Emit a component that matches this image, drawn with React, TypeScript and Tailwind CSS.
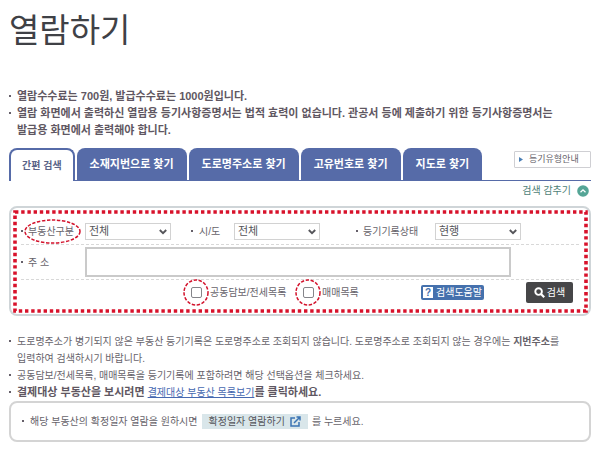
import React, { useState } from 'react';

interface ISelectFieldProps {
    id: string;
    options: string[];
}

const TABS = ['간편 검색', '소재지번으로 찾기', '도로명주소로 찾기', '고유번호로 찾기', '지도로 찾기'];

/** Small square bullet in front of notes and labels */
const Bullet: React.FC = () => <span className="mt-[7px] h-[2px] w-[2px] shrink-0 bg-[#66606a]" />;

/** Dashed red ellipse that highlights the control below it */
const Highlight: React.FC<{ className: string }> = ({ className }) => (
    <svg className={`pointer-events-none absolute overflow-visible ${className}`}>
        <ellipse cx="50%" cy="50%" rx="50%" ry="50%" fill="none" stroke="#d3122c" strokeWidth="1.5" strokeDasharray="3.4 1.6" />
    </svg>
);

const SelectField: React.FC<ISelectFieldProps> = ({ id, options }) => (
    <div className="relative w-[86px] shrink-0">
        <select
            id={id}
            className="h-[17px] w-full appearance-none border border-[#d2d2d2] bg-white pl-[3px] text-[11px] leading-[15px] text-[#55555a]"
        >
            {options.map((option) => (
                <option key={option}>{option}</option>
            ))}
        </select>
        <svg className="pointer-events-none absolute top-[6px] right-1 h-[6px] w-2" viewBox="0 0 8 6" fill="none">
            <path d="M0.8 1 L4 4.2 L7.2 1" stroke="#55555a" strokeWidth="1.9" />
        </svg>
    </div>
);

const App: React.FC = () => {
    const [activeTab, setActiveTab] = useState(0);

    return (
        <main className="bg-white px-[9px] pb-2 font-['Liberation_Sans','Noto_Sans_CJK_KR',sans-serif] text-[10px] text-[#67636b]">
            <h1 className="pt-[11px] text-[33px] leading-10 text-[#3f4146]">열람하기</h1>

            {/* Fee notes */}
            <ul className="mt-[37px] text-[11px] leading-[17px] font-bold text-[#5f5762]">
                <li className="flex gap-[6px]">
                    <Bullet />
                    <span>열람수수료는 700원, 발급수수료는 1000원입니다.</span>
                </li>
                <li className="flex gap-[6px]">
                    <Bullet />
                    <span>
                        열람 화면에서 출력하신 열람용 등기사항증명서는 법적 효력이 없습니다. 관공서 등에 제출하기 위한 등기사항증명서는
                        <br />
                        발급용 화면에서 출력해야 합니다.
                    </span>
                </li>
            </ul>

            {/* Tabs */}
            <div className="mt-[9px] flex items-start justify-between border-b border-[#566ba8]">
                <div className="-mb-px flex gap-[2px]" role="tablist">
                    {TABS.map((tab, index) => (
                        <button
                            key={tab}
                            role="tab"
                            aria-selected={index === activeTab}
                            onClick={() => setActiveTab(index)}
                            className={`h-[33px] rounded-t-lg pb-px font-bold whitespace-nowrap ${index === activeTab
                                    ? 'border-2 border-b-0 border-[#566ba8] bg-white px-[11px] text-[10px] text-[#5a6488]'
                                    : 'bg-[#566ba8] px-[13px] text-[11px] text-white'
                                }`}
                        >
                            {tab}
                        </button>
                    ))}
                </div>
                <button className="mt-[3px] flex h-[17px] w-[77px] items-center gap-[6px] rounded-[1px] border border-[#cfcfd3] bg-white pl-1 text-[9px] whitespace-nowrap text-[#67636b]">
                    <svg className="h-[5px] w-1" viewBox="0 0 4 5">
                        <path d="M0 0 L4 2.5 L0 5 Z" fill="#4b7fb5" />
                    </svg>
                    등기유형안내
                </button>
            </div>

            <div className="flex h-[25px] items-center justify-end pb-[6px]">
                <button className="flex items-center gap-[6px] pr-[2px] text-[#4f7f78]">
                    검색 감추기
                    <svg className="h-3 w-3" viewBox="0 0 12 12">
                        <circle cx="6" cy="6" r="5.8" fill="#55a596" />
                        <path d="M3.5 7.2 L6 4.8 L8.5 7.2" fill="none" stroke="#fff" strokeWidth="1.3" />
                    </svg>
                </button>
            </div>

            {/* Search form */}
            <form
                onSubmit={(event) => event.preventDefault()}
                className="relative rounded-lg border-2 border-[#cfd5d8] px-[10px] pt-[15px] pb-[11px]"
            >
                <div className="pointer-events-none absolute top-1 right-[3px] bottom-[3px] left-1">
                    <svg className="h-full w-full overflow-visible">
                        <rect width="100%" height="100%" fill="none" stroke="#d8122b" strokeWidth="3.6" strokeDasharray="3.4 2.8" />
                    </svg>
                </div>

                <div className="flex items-center border-b border-dashed border-[#d8d8d8] pb-1">
                    <label htmlFor="kind" className="relative flex w-[64px] gap-[5px] leading-[17px]">
                        <Bullet />
                        부동산구분
                        <Highlight className="-top-[3px] left-1 h-[23px] w-[55px]" />
                    </label>
                    <SelectField id="kind" options={['전체', '토지', '건물', '집합건물']} />
                    <label htmlFor="region" className="ml-5 flex w-[43px] gap-[6px] leading-[17px]">
                        <Bullet />
                        시/도
                    </label>
                    <SelectField id="region" options={['전체', '서울특별시', '부산광역시']} />
                    <label htmlFor="status" className="ml-9 flex w-[79px] gap-[5px] leading-[17px]">
                        <Bullet />
                        등기기록상태
                    </label>
                    <SelectField id="status" options={['현행', '폐쇄', '현행+폐쇄']} />
                </div>

                <div className="flex items-center border-b border-dashed border-[#d8d8d8] py-[2px]">
                    <label htmlFor="address" className="flex w-[64px] gap-[5px] leading-[17px]">
                        <Bullet />주 소
                    </label>
                    <input
                        id="address"
                        type="text"
                        className="mr-[68px] h-[30px] min-w-0 flex-1 border-2 border-[#cacaca] bg-white px-2 text-[11px]"
                    />
                </div>

                <div className="flex items-center pt-[2px] pr-[6px] pl-[170px]">
                    <label className="relative flex w-[112px] items-center gap-2">
                        <input type="checkbox" className="h-[11px] w-[11px] appearance-none rounded-[2px] border border-[#85858a] bg-white checked:bg-[#566ba8]" />
                        공동담보/전세목록
                        <Highlight className="-top-[5px] -left-[7px] h-[25px] w-[24px]" />
                    </label>
                    <label className="relative flex items-center gap-2">
                        <input type="checkbox" className="h-[11px] w-[11px] appearance-none rounded-[2px] border border-[#85858a] bg-white checked:bg-[#566ba8]" />
                        매매목록
                        <Highlight className="-top-[5px] -left-[7px] h-[25px] w-[24px]" />
                    </label>
                    <button type="button" className="ml-auto flex h-[15px] items-center gap-[3px] rounded-[2px] bg-[#4571ad] pr-[2px] pl-[2px] text-white">
                        <span className="flex h-[11px] w-[10px] items-center justify-center bg-white text-[10px] leading-[11px] font-bold text-[#4571ad]">?</span>
                        검색도움말
                    </button>
                    <button type="submit" className="ml-[42px] flex h-[21px] w-[47px] items-center justify-center gap-[2px] rounded-[2px] bg-[#464648] text-white">
                        <svg className="h-[11px] w-[11px]" viewBox="0 0 11 11" fill="none" stroke="currentColor">
                            <circle cx="4.6" cy="4.6" r="3.3" strokeWidth="1.9" />
                            <path d="M7 7 L10.2 10.2" strokeWidth="2.2" />
                        </svg>
                        검색
                    </button>
                </div>
            </form>

            {/* Search notes */}
            <ul className="mt-[17px] leading-[17px]">
                <li className="flex gap-[6px]">
                    <Bullet />
                    <span>
                        도로명주소가 병기되지 않은 부동산 등기기록은 도로명주소로 조회되지 않습니다. 도로명주소로 조회되지 않는 경우에는 <b>지번주소</b>를
                        <br />
                        입력하여 검색하시기 바랍니다.
                    </span>
                </li>
                <li className="flex gap-[6px]">
                    <Bullet />
                    <span>공동담보/전세목록, 매매목록을 등기기록에 포함하려면 해당 선택옵션을 체크하세요.</span>
                </li>
                <li className="flex gap-[6px] text-[11px] font-bold text-[#5f5762]">
                    <Bullet />
                    <span>
                        결제대상 부동산을 보시려면{' '}
                        <a href="#list" className="text-[10px] font-normal text-[#4668b0] underline">결제대상 부동산 목록보기</a>를 클릭하세요.
                    </span>
                </li>
            </ul>

            <div className="flex items-center rounded-lg border-2 border-[#d4d4d4] px-[11px] py-[10px]">
                <span className="flex gap-[6px] leading-[17px]">
                    <Bullet />
                    해당 부동산의 확정일자 열람을 원하시면
                </span>
                <button className="mx-1 flex h-[15px] items-center gap-[5px] bg-[#d9e6ea] px-[7px] text-[#55555a]">
                    확정일자 열람하기
                    <svg className="h-[11px] w-[11px]" viewBox="0 0 11 11" fill="none" stroke="#3b74b4" strokeWidth="1.5">
                        <path d="M5 2 H1 V10 H9 V6" />
                        <path d="M4 7 L9.5 1.5 M6.5 1 H10 V4.5" />
                    </svg>
                </button>
                를 누르세요.
            </div>
        </main>
    );
};

export default App;
